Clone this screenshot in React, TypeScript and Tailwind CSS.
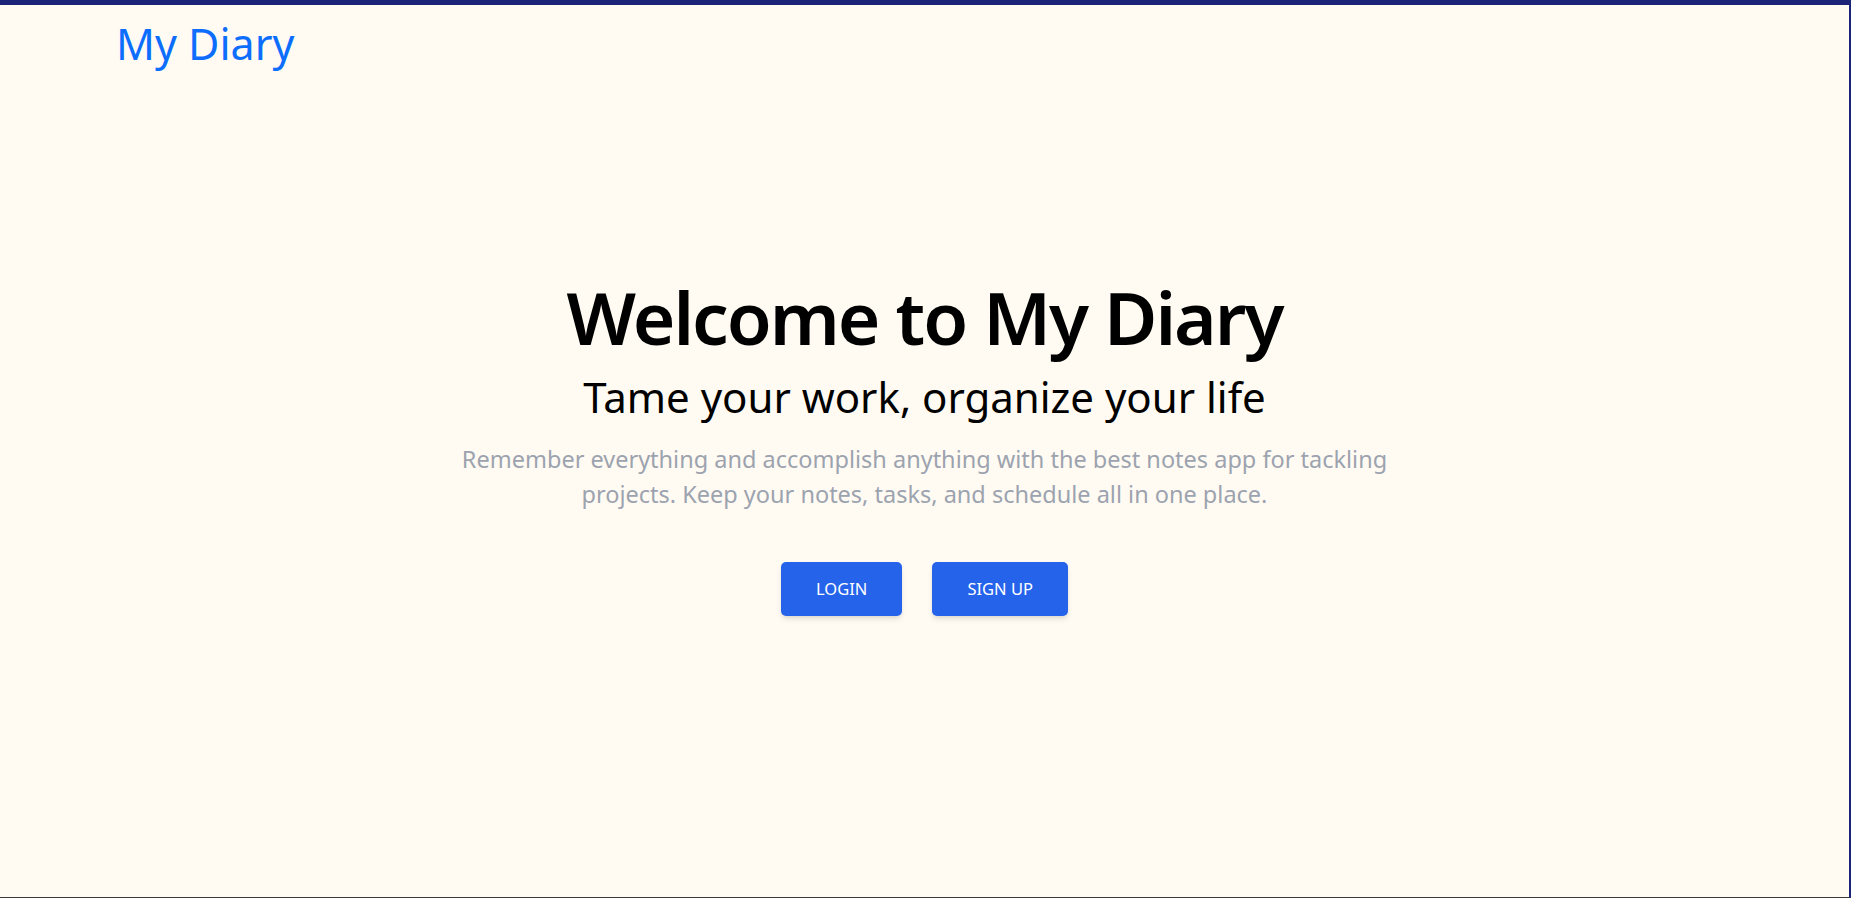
import React from "react";

export default function App() {
  return (
    <div
      className="h-[898px] w-full overflow-hidden bg-[#fffbf3] border-t-[5px] border-t-[#1c2479] border-r-2 border-r-[#1c2479] border-b border-b-[#3a3a3a] flex flex-col"
      style={{ fontFamily: '"Noto Sans", "Open Sans", sans-serif' }}
    >
      <header className="pl-[116px] pt-[9px]">
        <span className="text-[43px] leading-[60px] text-[#0d6efd]">My Diary</span>
      </header>
      <main className="flex flex-col items-center pt-[195px]">
        <h1 className="text-[73px] leading-[96px] font-semibold text-black tracking-[-2px]">
          Welcome to My Diary
        </h1>
        <h2 className="text-[42px] leading-[52px] text-black mt-[6px]">
          Tame your work, organize your life
        </h2>
        <p className="text-[23.5px] leading-[35px] text-[#9ca3af] text-center max-w-[980px] mt-[19px]">
          Remember everything and accomplish anything with the best notes app for tackling projects. Keep your notes, tasks, and schedule all in one place.
        </p>
        <div className="flex gap-[30px] mt-[50px]">
          <button className="h-[54px] px-[35px] rounded-[5px] bg-[#2563eb] text-white text-[16.5px] uppercase shadow-md">
            Login
          </button>
          <button className="h-[54px] px-[35px] rounded-[5px] bg-[#2563eb] text-white text-[16.5px] uppercase shadow-md">
            Sign up
          </button>
        </div>
      </main>
    </div>
  );
}
